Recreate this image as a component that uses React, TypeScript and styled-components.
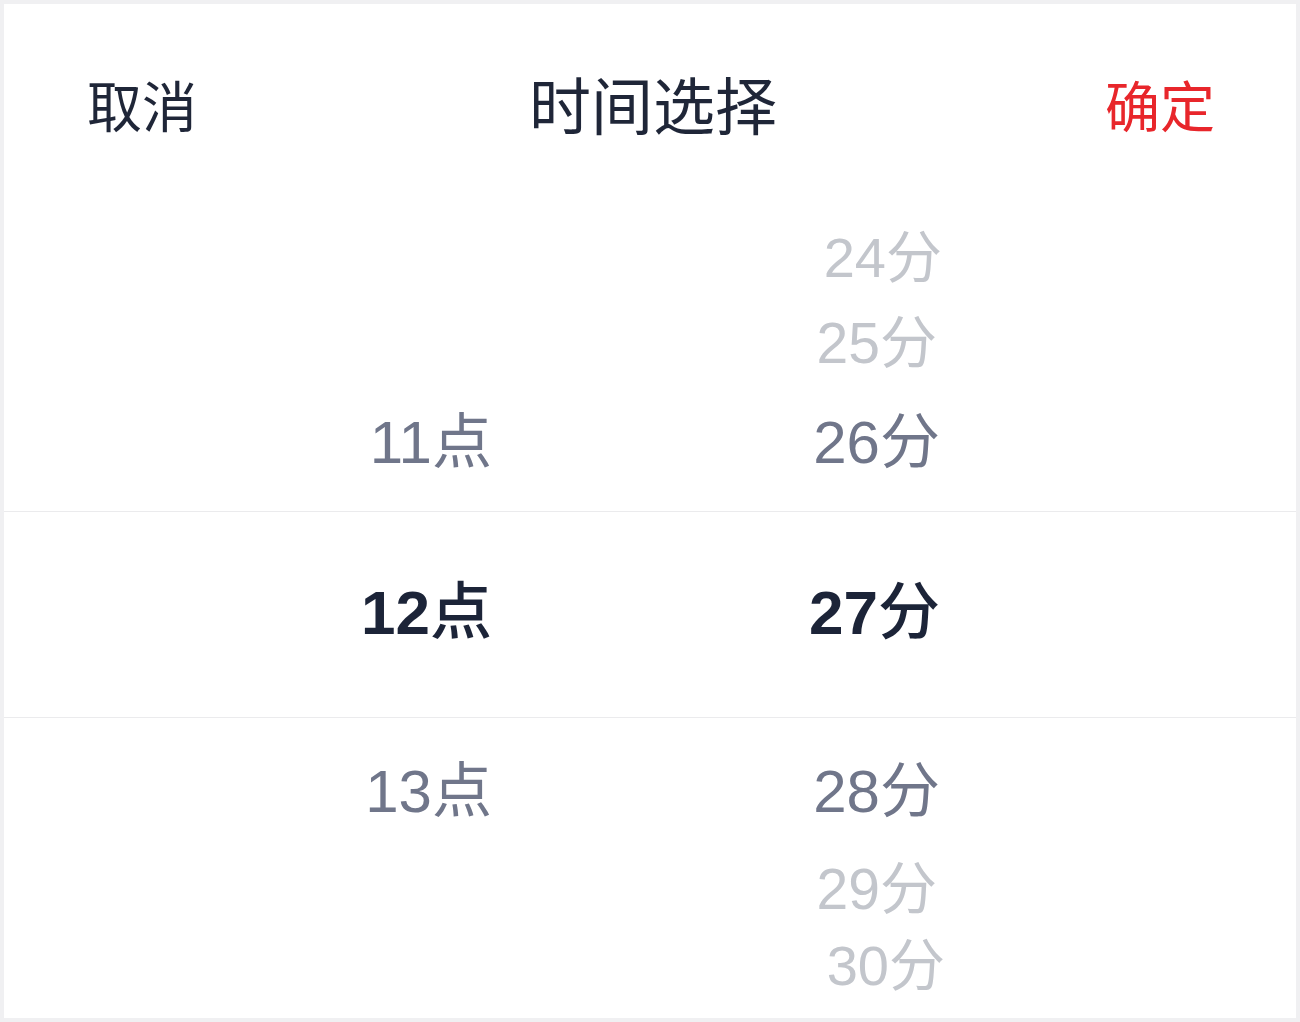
import React from "react";
import styled, { createGlobalStyle } from "styled-components";

const Global = createGlobalStyle`
  html, body {
    margin: 0;
    padding: 0;
    background: #f0f0f2;
  }
  * { box-sizing: border-box; }
`;

const Card = styled.div`
  margin: 4px;
  height: 1014px;
  background: #ffffff;
  display: flex;
  flex-direction: column;
  overflow: hidden;
  font-family: "Liberation Sans", "Noto Sans CJK SC", sans-serif;
`;

const Header = styled.div`
  height: 208px;
  flex: none;
  display: grid;
  grid-template-columns: 1fr auto 1fr;
  align-items: center;
  padding: 0 81px 10px 83px;
  font-family: "Noto Sans CJK SC", sans-serif;
`;

const HeaderButton = styled.button<{ $tone: "plain" | "accent"; $align: "start" | "end" }>`
  all: unset;
  justify-self: ${(p) => p.$align};
  font-size: 55px;
  line-height: 1;
  color: ${(p) => (p.$tone === "accent" ? "#e8262b" : "#1f2638")};
  cursor: pointer;
`;

const Title = styled.div`
  font-size: 62px;
  line-height: 1;
  color: #1f2638;
  margin-left: 4px;
`;

const Picker = styled.div`
  flex: 1;
  display: flex;
  flex-direction: column;
`;

const Region = styled.div<{ $place: "start" | "end" }>`
  display: grid;
  grid-template-columns: 488px 448px 1fr;
  height: ${(p) => (p.$place === "end" ? "299px" : "auto")};
  flex: ${(p) => (p.$place === "end" ? "none" : "1")};
`;

const Band = styled.div`
  display: grid;
  grid-template-columns: 488px 448px 1fr;
  height: 207px;
  flex: none;
  border-top: 1px solid #ebebed;
  border-bottom: 1px solid #ebebed;
  align-items: center;
`;

const Column = styled.div<{ $place: "start" | "end" }>`
  display: flex;
  flex-direction: column;
  justify-content: ${(p) => (p.$place === "end" ? "flex-end" : "flex-start")};
  padding-bottom: ${(p) => (p.$place === "end" ? "10px" : "0")};
`;

type Level = "selected" | "near" | "mid" | "far";

const colors: Record<Level, string> = {
  selected: "#1c2438",
  near: "#70768a",
  mid: "#c3c6cc",
  far: "#c3c6cc",
};

const sizes: Record<Level, number> = {
  selected: 62,
  near: 60,
  mid: 57,
  far: 56,
};

const LIFT = 10;

const Item = styled.div<{ $level: Level; $h?: number; $dx?: number }>`
  height: ${(p) => (p.$h ? `${p.$h}px` : "auto")};
  line-height: ${(p) => (p.$h ? `${p.$h - LIFT}px` : "1")};
  padding-bottom: ${LIFT}px;
  text-align: right;
  white-space: nowrap;
  padding-right: ${(p) => Math.max(-(p.$dx ?? 0), 0)}px;
  margin-right: ${(p) => -Math.max(p.$dx ?? 0, 0)}px;
  font-size: ${(p) => sizes[p.$level]}px;
  color: ${(p) => colors[p.$level]};
`;

const Num = styled.span<{ $strong: boolean }>`
  font-family: "Liberation Sans", sans-serif;
  font-weight: ${(p) => (p.$strong ? 700 : 400)};
`;

const Unit = styled.span<{ $strong: boolean }>`
  font-family: "Noto Sans CJK SC", sans-serif;
  font-weight: ${(p) => (p.$strong ? 500 : 400)};
`;

type Entry = { num: string; unit: string; level: Level; h?: number; dx?: number };

const hoursAbove: Entry[] = [{ num: "11", unit: "点", level: "near", h: 118 }];
const minutesAbove: Entry[] = [
  { num: "24", unit: "分", level: "far", h: 90, dx: 2 },
  { num: "25", unit: "分", level: "mid", h: 80, dx: -3 },
  { num: "26", unit: "分", level: "near", h: 118 },
];
const hoursBelow: Entry[] = [{ num: "13", unit: "点", level: "near", h: 146 }];
const minutesBelow: Entry[] = [
  { num: "28", unit: "分", level: "near", h: 146 },
  { num: "29", unit: "分", level: "mid", h: 50, dx: -3 },
  { num: "30", unit: "分", level: "far", h: 104, dx: 5 },
];

const Label = ({ e }: { e: Entry }) => {
  const strong = e.level === "selected";
  return (
    <Item $level={e.level} $h={e.h} $dx={e.dx}>
      <Num $strong={strong}>{e.num}</Num>
      <Unit $strong={strong}>{e.unit}</Unit>
    </Item>
  );
};

const renderList = (list: Entry[]) => list.map((e) => <Label key={e.num + e.unit} e={e} />);

export default function App() {
  return (
    <>
      <Global />
      <Card>
        <Header>
          <HeaderButton $tone="plain" $align="start">取消</HeaderButton>
          <Title>时间选择</Title>
          <HeaderButton $tone="accent" $align="end">确定</HeaderButton>
        </Header>
        <Picker>
          <Region $place="end">
            <Column $place="end">{renderList(hoursAbove)}</Column>
            <Column $place="end">{renderList(minutesAbove)}</Column>
          </Region>
          <Band>
            <Label e={{ num: "12", unit: "点", level: "selected" }} />
            <Label e={{ num: "27", unit: "分", level: "selected" }} />
          </Band>
          <Region $place="start">
            <Column $place="start">{renderList(hoursBelow)}</Column>
            <Column $place="start">{renderList(minutesBelow)}</Column>
          </Region>
        </Picker>
      </Card>
    </>
  );
}
